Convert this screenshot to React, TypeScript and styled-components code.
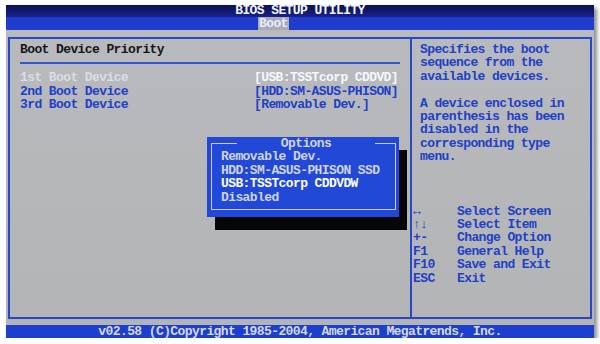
import styled, { createGlobalStyle } from 'styled-components';

const GlobalStyle = createGlobalStyle`
  html, body {
    margin: 0;
    background: #ffffff;
  }
  body {
    font-family: "Liberation Mono", "DejaVu Sans Mono", monospace;
    font-size: 13px;
    font-weight: 700;
    letter-spacing: -0.6px;
  }
`;

const devices = [
  { label: '1st Boot Device', value: '[USB:TSSTcorp CDDVD]', active: true },
  { label: '2nd Boot Device', value: '[HDD:SM-ASUS-PHISON]', active: false },
  { label: '3rd Boot Device', value: '[Removable Dev.]', active: false },
];

const helpLines = [
  'Specifies the boot',
  'sequence from the',
  'available devices.',
  '',
  'A device enclosed in',
  'parenthesis has been',
  'disabled in the',
  'corresponding type',
  'menu.',
];

const keys = [
  { key: '\u2194', action: 'Select Screen' },
  { key: '\u2191\u2193', action: 'Select Item' },
  { key: '+-', action: 'Change Option' },
  { key: 'F1', action: 'General Help' },
  { key: 'F10', action: 'Save and Exit' },
  { key: 'ESC', action: 'Exit' },
];

const options = [
  { name: 'Removable Dev.', selected: false },
  { name: 'HDD:SM-ASUS-PHISON SSD', selected: false },
  { name: 'USB:TSSTcorp CDDVDW', selected: true },
  { name: 'Disabled', selected: false },
];

export default function App() {
  return (
    <>
      <GlobalStyle />
      <Page>
        <Screen>
          <TitleBar>BIOS SETUP UTILITY</TitleBar>
          <TabBar>
            <Tab>Boot</Tab>
          </TabBar>
          <Main>
            <Panels>
              <SettingsPanel>
                <PanelTitle>Boot Device Priority</PanelTitle>
                <Divider />
                <DeviceList>
                  {devices.map((d) => (
                    <DeviceRow key={d.label}>
                      <DeviceLabel $active={d.active}>{d.label}</DeviceLabel>
                      <DeviceValue $active={d.active}>{d.value}</DeviceValue>
                    </DeviceRow>
                  ))}
                </DeviceList>
              </SettingsPanel>
              <HelpPanel>
                <HelpText>
                  {helpLines.map((line, i) => (
                    <HelpLine key={i}>{line || '\u00a0'}</HelpLine>
                  ))}
                </HelpText>
                <KeyList>
                  {keys.map((k) => (
                    <KeyRow key={k.action}>
                      <KeyName>{k.key}</KeyName>
                      <span>{k.action}</span>
                    </KeyRow>
                  ))}
                </KeyList>
              </HelpPanel>
            </Panels>
            <OptionsPopup>
              <OptionsFrame>
                <OptionsLegend>Options</OptionsLegend>
                {options.map((o) => (
                  <OptionItem key={o.name} $selected={o.selected}>
                    {o.name}
                  </OptionItem>
                ))}
              </OptionsFrame>
            </OptionsPopup>
          </Main>
          <Footer>v02.58 (C)Copyright 1985-2004, American Megatrends, Inc.</Footer>
        </Screen>
      </Page>
    </>
  );
}

const Page = styled.div`
  padding: 5px 0 0 6px;
`;

const Screen = styled.div`
  width: 588px;
  height: 333px;
  display: flex;
  flex-direction: column;
  box-shadow: 3px 3px 4px rgba(0, 0, 0, 0.45);
  line-height: 13.4px;
`;

const TitleBar = styled.div`
  height: 12px;
  line-height: 12px;
  text-align: center;
  color: #f4f6ff;
  background: linear-gradient(#0b1150, #18228a);
`;

const TabBar = styled.div`
  height: 13px;
  display: flex;
  padding-left: 252px;
  background: #1f3ccc;
`;

const Tab = styled.div`
  padding: 0 1px;
  line-height: 13px;
  color: #e6ecff;
  background: #a9abb6;
`;

const Main = styled.div`
  position: relative;
  flex: 1;
  padding: 7px 2px 6px 2px;
  background: linear-gradient(#b9babd, #b3b4b6);
`;

const Panels = styled.div`
  height: 100%;
  box-sizing: border-box;
  display: grid;
  grid-template-columns: 402px 1fr;
  border: 2px solid #2b47c9;
`;

const SettingsPanel = styled.div`
  padding: 4px 10px 0 10px;
  border-right: 2px solid #2b47c9;
`;

const PanelTitle = styled.div`
  color: #161616;
`;

const Divider = styled.div`
  height: 2px;
  margin: 6px 0 7px;
  background: #3a55d0;
`;

const DeviceList = styled.div`
  display: flex;
  flex-direction: column;
`;

const DeviceRow = styled.div`
  display: grid;
  grid-template-columns: 234px 1fr;
`;

const DeviceLabel = styled.span<{ $active: boolean }>`
  color: ${({ $active }) => ($active ? '#dcdde0' : '#2140c8')};
`;

const DeviceValue = styled.span<{ $active: boolean }>`
  color: ${({ $active }) => ($active ? '#f6f7fa' : '#2140c8')};
`;

const HelpPanel = styled.div`
  padding: 4px 6px 0 8px;
  color: #2140c8;
`;

const HelpText = styled.div`
  display: flex;
  flex-direction: column;
`;

const HelpLine = styled.div`
  white-space: pre;
`;

const KeyList = styled.div`
  margin: 41px 0 0 -7px;
  display: flex;
  flex-direction: column;
`;

const KeyRow = styled.div`
  display: grid;
  grid-template-columns: 44px 1fr;
`;

const KeyName = styled.span`
  white-space: pre;
`;

const Footer = styled.div`
  height: 13px;
  line-height: 13px;
  text-align: center;
  color: #d6d8e2;
  background: #1d3fd0;
`;

const OptionsPopup = styled.div`
  position: absolute;
  left: 201px;
  top: 107px;
  width: 192px;
  box-sizing: border-box;
  padding: 0 3px 7px 4px;
  background: #2148d6;
  box-shadow: 8px 13px 0 #060606;
`;

const OptionsFrame = styled.fieldset`
  margin: 0;
  min-width: 0;
  padding: 0 4px 5px 9px;
  border: 1px solid #c9d0ea;
`;

const OptionsLegend = styled.legend`
  margin: 0 auto;
  padding: 0 44px;
  color: #d2d7ea;
`;

const OptionItem = styled.div<{ $selected: boolean }>`
  white-space: pre;
  color: ${({ $selected }) => ($selected ? '#ffffff' : '#cfd5ea')};
`;
